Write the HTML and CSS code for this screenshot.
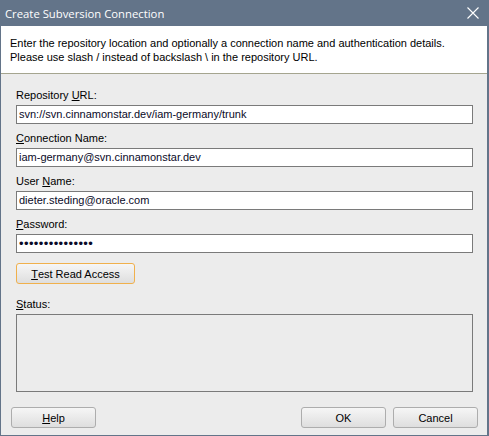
FILE: index.html
```html
<!DOCTYPE html>
<html>
<head>
<meta charset="utf-8">
<link rel="stylesheet" href="styles.css">
</head>
<body>
<div class="window">
  <div class="titlebar">
    <span class="title">Create Subversion Connection</span>
    <svg class="close" width="12" height="12" viewBox="0 0 12 12"><path d="M0.5 0.5 L11.5 11.5 M11.5 0.5 L0.5 11.5" stroke="#fff" stroke-width="1.1" fill="none"/></svg>
  </div>
  <div class="header">
    <p>Enter the repository location and optionally a connection name and authentication details.</p>
    <p>Please use slash / instead of backslash \ in the repository URL.</p>
  </div>
  <div class="content">
    <div class="field">
      <label>Repository <u>U</u>RL:</label>
      <div class="input">svn://svn.cinnamonstar.dev/iam-germany/trunk</div>
    </div>
    <div class="field">
      <label><u>C</u>onnection Name:</label>
      <div class="input">iam-germany@svn.cinnamonstar.dev</div>
    </div>
    <div class="field">
      <label>User <u>N</u>ame:</label>
      <div class="input">dieter.steding@oracle.com</div>
    </div>
    <div class="field">
      <label><u>P</u>assword:</label>
      <div class="input pw">•••••••••••••••</div>
    </div>
    <div class="testrow">
      <div class="btn focused"><u>T</u>est Read Access</div>
    </div>
    <div class="field status">
      <label><u>S</u>tatus:</label>
      <div class="statusbox"></div>
    </div>
  </div>
  <div class="footer">
    <div class="btn"><u>H</u>elp</div>
    <div class="spacer"></div>
    <div class="btn">OK</div>
    <div class="btn">Cancel</div>
  </div>
</div>
</body>
</html>
```

FILE: styles.css
```css
html, body {
  margin: 0;
  padding: 0;
  background: #ececec;
}
.window {
  width: 489px;
  height: 436px;
  box-sizing: border-box;
  border-left: 1px solid #637489;
  border-right: 2px solid #637489;
  border-bottom: 1px solid #637489;
  background: #ececec;
  display: flex;
  flex-direction: column;
  font-family: "Liberation Sans", Arial, sans-serif;
  font-size: 11px;
  color: #000;
}
.titlebar {
  height: 26px;
  margin-left: -1px;
  margin-right: -2px;
  background: #637489;
  display: flex;
  align-items: center;
  padding: 0 10px 0 5px;
  flex-shrink: 0;
}
.title {
  color: #fff;
  font-family: "Open Sans", "Noto Sans", sans-serif;
  font-size: 11.3px;
  flex: 1;
}
.close {
  display: block;
}
.header {
  background: #fff;
  height: 48px;
  box-sizing: border-box;
  padding: 10px 9px 0;
  border-bottom: 1px solid #a5a58f;
  flex-shrink: 0;
}
.header p {
  margin: 0;
  line-height: 14px;
}
.content {
  padding: 14px 14px 0 15px;
  display: flex;
  flex-direction: column;
}
.field label {
  display: block;
  line-height: 14px;
  margin-bottom: 3px;
}
.field {
  margin-bottom: 7px;
}
.input {
  height: 19px;
  box-sizing: border-box;
  border: 1px solid #7a7a7a;
  background: #fff;
  line-height: 17px;
  padding-left: 2px;
  color: #0a0a28;
  white-space: nowrap;
  overflow: hidden;
}
.input.pw {
  font-size: 13px;
  letter-spacing: 0.4px;
}
.testrow {
  display: flex;
  margin-top: 3px;
  margin-bottom: 13px;
}
.btn {
  width: 85px;
  height: 21px;
  box-sizing: border-box;
  border: 1px solid #adadad;
  border-radius: 3px;
  background: linear-gradient(#f6f6f6, #dedede);
  display: flex;
  align-items: center;
  justify-content: center;
  color: #000;
}
.btn.focused {
  width: 119px;
  border-color: #f0b04c;
}
.statusbox {
  height: 78px;
  box-sizing: border-box;
  border: 1px solid #7a7a7a;
}
.footer {
  margin-top: auto;
  display: flex;
  padding: 0 9px 7px 10px;
  gap: 7px;
}
.spacer {
  flex: 1;
}
u {
  text-decoration: underline;
  text-underline-offset: 1px;
}
```
